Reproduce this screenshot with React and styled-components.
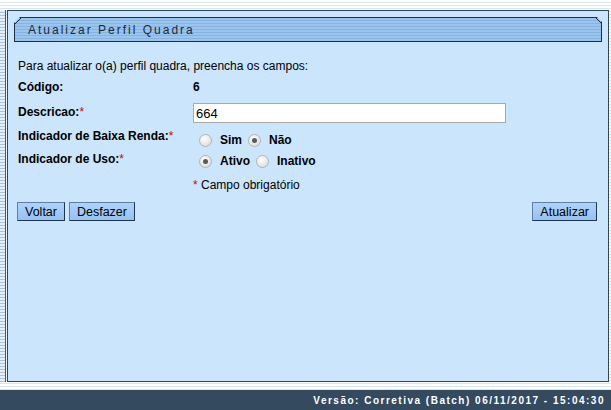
import React from 'react';
import styled, { createGlobalStyle } from 'styled-components';

const GlobalStyle = createGlobalStyle`
  html, body {
    margin: 0;
    padding: 0;
  }
  body {
    font-family: "Liberation Sans", Arial, sans-serif;
    font-size: 12px;
    color: #000;
  }
`;

const stripes = `repeating-linear-gradient(
  to bottom,
  #ffffff 0px,
  #ffffff 2px,
  #d7e4f1 2px,
  #d7e4f1 3px
)`;

const Page = styled.div`
  display: flex;
  flex-direction: column;
  height: 410px;
  width: 611px;
  background: ${stripes};
  overflow: hidden;
`;

const Body = styled.div`
  display: flex;
  flex: 1;
  margin-top: 10px;
  margin-bottom: 8px;
  min-height: 0;
`;

const SideStrip = styled.div`
  width: 5px;
  border-right: 1px solid #3a5a7c;
  background: repeating-linear-gradient(
    to bottom,
    #e6eef7 0px,
    #e6eef7 2px,
    #a9c4de 2px,
    #a9c4de 3px
  );
  margin-right: 1px;
`;

const Panel = styled.div`
  flex: 1;
  margin-right: 2px;
  background: #cbe5fd;
  border: 1px solid #2b4666;
  padding: 6px 6px 0 6px;
  display: flex;
  flex-direction: column;
`;

const TitleBar = styled.div`
  height: 23px;
  border: 1px solid #1d2f44;
  clip-path: polygon(6px 0, calc(100% - 5px) 0, 100% 5px, 100% 100%, 0 100%, 0 6px);
  background: repeating-linear-gradient(
    to bottom,
    #9cc5ee 0px,
    #9cc5ee 2px,
    #84b3e3 2px,
    #84b3e3 3px
  );
  display: flex;
  align-items: center;
  padding-left: 13px;
  font-size: 12px;
  letter-spacing: 2px;
  color: #1b2a3a;
  position: relative;
`;

const Corner = styled.svg`
  position: absolute;
  top: -1px;
  width: 8px;
  height: 8px;
  left: ${p => (p.$right ? 'auto' : '-1px')};
  right: ${p => (p.$right ? '-1px' : 'auto')};
`;

const Form = styled.div`
  padding: 17px 4px 0 4px;
  display: flex;
  flex-direction: column;
`;

const Intro = styled.div`
  height: 21px;
`;

const Row = styled.div`
  display: flex;
  height: ${p => p.$h}px;
`;

const Label = styled.div`
  width: 175px;
  font-weight: bold;
  padding-top: ${p => p.$pt || 0}px;
`;

const Value = styled.div`
  display: flex;
  align-items: flex-start;
  padding-top: ${p => p.$pt || 0}px;
  font-weight: ${p => (p.$bold ? 'bold' : 'normal')};
`;

const Req = styled.span`
  color: #d40000;
  font-weight: normal;
`;

const TextInput = styled.div`
  width: 309px;
  height: 18px;
  border: 1px solid #a9a9a9;
  background: #fff;
  padding-left: 2px;
  display: flex;
  align-items: center;
  font-size: 13px;
  margin-top: 2px;
`;

const RadioGroup = styled.div`
  display: flex;
  align-items: center;
  padding-left: 6px;
`;

const Radio = styled.span`
  width: 11px;
  height: 11px;
  border-radius: 50%;
  border: 1px solid #b4b4b4;
  background: radial-gradient(circle at 40% 35%, #ffffff 0%, #e6e6e6 60%, #d2d2d2 100%);
  display: inline-flex;
  align-items: center;
  justify-content: center;
  margin-right: 8px;
  &::after {
    content: '';
    width: 5px;
    height: 5px;
    border-radius: 50%;
    background: ${p => (p.$checked ? '#5a5a5a' : 'transparent')};
  }
`;

const Option = styled.span`
  font-weight: bold;
  margin-right: 6px;
`;

const Buttons = styled.div`
  display: flex;
  justify-content: space-between;
  padding: 0 1px 0 0;
  margin-left: -1px;
`;

const ButtonGroup = styled.div`
  display: flex;
  gap: 4px;
`;

const Button = styled.button`
  font-family: "Liberation Sans", Arial, sans-serif;
  font-size: 12.5px;
  color: #000;
  height: 19px;
  padding: 0 7px;
  background: linear-gradient(to bottom, #aed3fa, #95c2f1);
  border: 1px solid #1e3654;
  border-top-color: #5f7fa3;
  border-left-color: #5f7fa3;
  cursor: pointer;
`;

const Footer = styled.div`
  height: 20px;
  background: #344a5f;
  color: #fff;
  font-weight: bold;
  font-size: 10px;
  letter-spacing: 1.5px;
  display: flex;
  align-items: center;
  justify-content: flex-end;
  padding-right: 6px;
`;

export default function App() {
  return (
    <>
      <GlobalStyle />
      <Page>
        <Body>
          <SideStrip />
          <Panel>
            <TitleBar>
              <Corner viewBox="0 0 8 8">
                <line x1="0.5" y1="7.5" x2="7.5" y2="0.5" stroke="#1d2f44" strokeWidth="1" />
              </Corner>
              <Corner $right viewBox="0 0 8 8">
                <line x1="1.5" y1="0.5" x2="7.5" y2="6.5" stroke="#1d2f44" strokeWidth="1" />
              </Corner>
              Atualizar Perfil Quadra
            </TitleBar>
            <Form>
              <Intro>Para atualizar o(a) perfil quadra, preencha os campos:</Intro>
              <Row $h={21}>
                <Label>Código:</Label>
                <Value $bold>6</Value>
              </Row>
              <Row $h={24}>
                <Label $pt={4}>
                  Descricao:<Req>*</Req>
                </Label>
                <Value>
                  <TextInput>664</TextInput>
                </Value>
              </Row>
              <Row $h={23}>
                <Label $pt={4}>
                  Indicador de Baixa Renda:<Req>*</Req>
                </Label>
                <Value $pt={8}>
                  <RadioGroup>
                    <Radio />
                    <Option>Sim</Option>
                    <Radio $checked />
                    <Option>Não</Option>
                  </RadioGroup>
                </Value>
              </Row>
              <Row $h={26}>
                <Label $pt={4}>
                  Indicador de Uso:<Req>*</Req>
                </Label>
                <Value $pt={6}>
                  <RadioGroup>
                    <Radio $checked />
                    <Option>Ativo</Option>
                    <Radio />
                    <Option>Inativo</Option>
                  </RadioGroup>
                </Value>
              </Row>
              <Row $h={28}>
                <Label />
                <Value $pt={4}>
                  <span>
                    <Req>*</Req> Campo obrigatório
                  </span>
                </Value>
              </Row>
              <Buttons>
                <ButtonGroup>
                  <Button>Voltar</Button>
                  <Button>Desfazer</Button>
                </ButtonGroup>
                <Button>Atualizar</Button>
              </Buttons>
            </Form>
          </Panel>
        </Body>
        <Footer>Versão: Corretiva (Batch) 06/11/2017 - 15:04:30</Footer>
      </Page>
    </>
  );
}
